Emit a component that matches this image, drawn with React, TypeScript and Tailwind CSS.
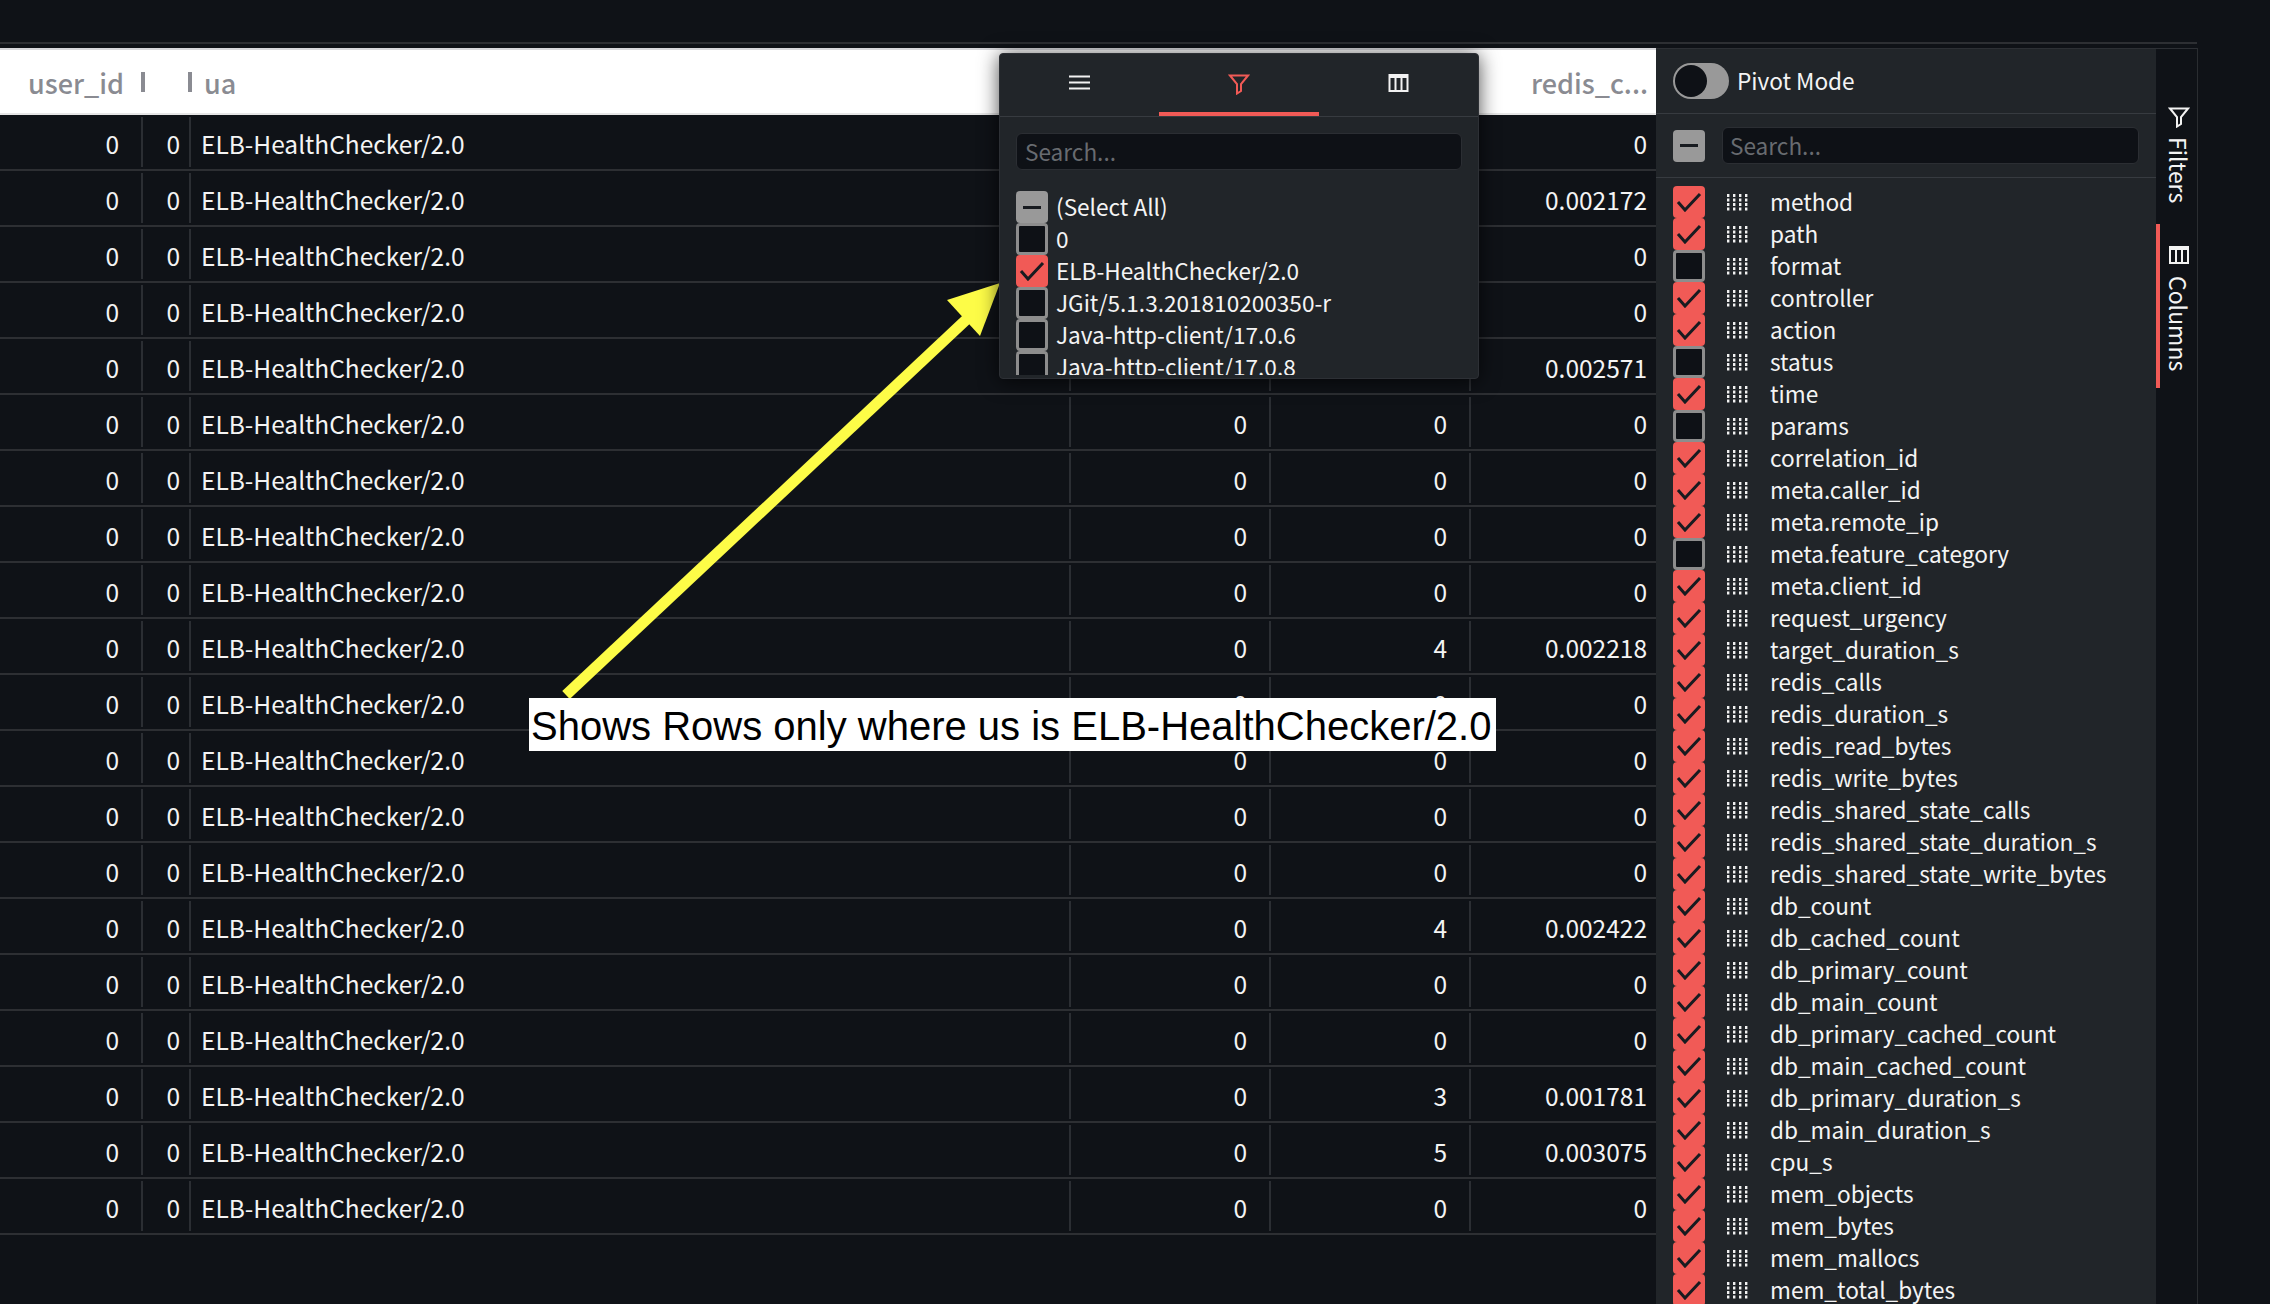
import React from 'react';

const redis = ['0', '0.002172', '0', '0', '0.002571', '0', '0', '0', '0', '0.002218', '0', '0', '0', '0', '0.002422', '0', '0', '0.001781', '0.003075', '0'];
const db = ['0', '4', '0', '0', '5', '0', '0', '0', '0', '4', '0', '0', '0', '0', '4', '0', '0', '3', '5', '0'];

const filterValues = [
  { label: '(Select All)', state: 'some' },
  { label: '0', state: 'off' },
  { label: 'ELB-HealthChecker/2.0', state: 'on' },
  { label: 'JGit/5.1.3.201810200350-r', state: 'off' },
  { label: 'Java-http-client/17.0.6', state: 'off' },
  { label: 'Java-http-client/17.0.8', state: 'off' },
];

const columns = [
  ['method', 'on'], ['path', 'on'], ['format', 'off'], ['controller', 'on'], ['action', 'on'], ['status', 'off'],
  ['time', 'on'], ['params', 'off'], ['correlation_id', 'on'], ['meta.caller_id', 'on'], ['meta.remote_ip', 'on'],
  ['meta.feature_category', 'off'], ['meta.client_id', 'on'], ['request_urgency', 'on'], ['target_duration_s', 'on'],
  ['redis_calls', 'on'], ['redis_duration_s', 'on'], ['redis_read_bytes', 'on'], ['redis_write_bytes', 'on'],
  ['redis_shared_state_calls', 'on'], ['redis_shared_state_duration_s', 'on'], ['redis_shared_state_write_bytes', 'on'],
  ['db_count', 'on'], ['db_cached_count', 'on'], ['db_primary_count', 'on'], ['db_main_count', 'on'],
  ['db_primary_cached_count', 'on'], ['db_main_cached_count', 'on'], ['db_primary_duration_s', 'on'],
  ['db_main_duration_s', 'on'], ['cpu_s', 'on'], ['mem_objects', 'on'], ['mem_bytes', 'on'], ['mem_mallocs', 'on'],
  ['mem_total_bytes', 'on'],
];

const Checkbox = ({ state }: { state: string }) => {
  if (state === 'on') {
    return (
      <span className="flex h-8 w-8 shrink-0 items-center justify-center rounded-[4px] bg-[#f15a56]">
        <svg width="26" height="20" viewBox="0 0 26 20" fill="none" stroke="#181b20" strokeWidth="3">
          <path d="M2 10l7 8L24 2" />
        </svg>
      </span>
    );
  }
  if (state === 'some') {
    return (
      <span className="flex h-8 w-8 shrink-0 items-center justify-center rounded-[4px] bg-[#999999]">
        <span className="h-[3px] w-[18px] bg-[#181b20]" />
      </span>
    );
  }
  return <span className="block h-8 w-8 shrink-0 rounded-[4px] border-[3px] border-[#8d8d8d] bg-[#0e1116]" />;
};

const Grip = () => (
  <svg width="21" height="17" viewBox="0 0 21 17" fill="#f2f2f2" className="shrink-0">
    {[0, 6, 12, 18].map((x) =>
      [0, 4.5, 9, 13.5].map((y) => <rect key={`${x}-${y}`} x={x} y={y} width="2.4" height="3" />),
    )}
  </svg>
);

const FunnelIcon = ({ color }: { color: string }) => (
  <svg width="22" height="21" viewBox="0 0 22 21" fill="none" stroke={color} strokeWidth="2">
    <path d="M2 1.5h18L13 10v7l-4 2.5V10z" />
  </svg>
);

const ColumnsIcon = ({ width, height }: { width: number; height: number }) => (
  <svg width={width} height={height} viewBox="0 0 20 18" fill="none" stroke="#f2f2f2" strokeWidth="2">
    <rect x="1" y="1" width="18" height="16" />
    <path d="M1 3h18M7 3v14M13 3v14" />
  </svg>
);

const Cell = ({ width, pad, text, last }: { width: string; pad: string; text: string; last?: boolean }) => (
  <div className={`flex h-[50px] items-center justify-end self-center pt-1 ${width} ${pad} ${last ? '' : 'border-r-2 border-[#2b2e33]'}`}>
    {text}
  </div>
);

export default function App() {
  return (
    <div
      className="relative h-[1304px] w-[2270px] overflow-hidden bg-[#0f1217] text-[#f4f4f4]"
      style={{ fontFamily: '"Noto Sans CJK JP", "Noto Sans", sans-serif' }}
    >
      {/* Top strip */}
      <div className="h-[44px] w-[2197px] border-b-2 border-[#2d2f33]" />

      <div className="mt-1 flex h-[1256px] w-[2198px] border-r border-[#2a2d31]">
        {/* Grid */}
        <div className="w-[1656px] shrink-0 border-t-2 border-[#d8d8dc]">
          <div className="flex h-[65px] items-center border-b-2 border-[#e6e6e6] bg-white text-[27px] font-medium text-[#8a8b92]">
            <div className="flex h-full w-[145px] items-center justify-between pl-7">
              <span className="pt-[3px]">user_id</span>
              <span className="h-5 w-1 bg-[#8a8b92]" />
            </div>
            <div className="flex h-full w-[47px] items-center justify-end">
              <span className="h-5 w-1 bg-[#8a8b92]" />
            </div>
            <div className="flex-1 pl-3 pt-[3px]">ua</div>
            <div className="pr-2 pt-[3px]">redis_c...</div>
          </div>
          {redis.map((value, i) => (
            <div key={i} className="flex h-[56px] items-center border-b-2 border-[#2d2f33] text-[24.5px]">
              <Cell width="w-[143px]" pad="pr-[22px]" text="0" />
              <Cell width="w-[48px]" pad="pr-[9px]" text="0" />
              <div className="flex h-[50px] w-[880px] items-center border-r-2 border-[#2b2e33] pl-[10px] pt-1">ELB-HealthChecker/2.0</div>
              <Cell width="w-[200px]" pad="pr-[22px]" text="0" />
              <Cell width="w-[200px]" pad="pr-[22px]" text={db[i]} />
              <Cell width="w-[185px]" pad="pr-[9px]" text={value} last />
            </div>
          ))}
        </div>

        {/* Columns panel */}
        <div className="flex w-[500px] shrink-0 flex-col overflow-hidden border-t border-[#2d3035] bg-[#212529]">
          <div className="flex h-[65px] shrink-0 items-center border-b border-[#373b40] pl-[17px] text-[22.6px]">
            <span className="relative h-9 w-14 shrink-0 rounded-full bg-[#999999]">
              <span className="absolute left-[2px] top-[2px] h-8 w-8 rounded-full bg-[#0e1116]" />
            </span>
            <span className="ml-2">Pivot Mode</span>
          </div>
          <div className="flex h-[64px] shrink-0 items-center border-b border-[#373b40] pl-[17px] pr-[17px]">
            <Checkbox state="some" />
            <div className="ml-[17px] flex h-[37px] flex-1 items-center rounded-[6px] border border-[#2b2e33] bg-[#0e1116] pl-[7px] text-[22.6px] text-[#686b70]">
              Search...
            </div>
          </div>
          <div className="pl-[17px] pt-[8px] text-[22.6px]">
            {columns.map(([name, state]) => (
              <div key={name} className="flex h-8 items-center">
                <Checkbox state={state} />
                <span className="ml-[22px]"><Grip /></span>
                <span className="mb-[1px] ml-[22px] whitespace-nowrap">{name}</span>
              </div>
            ))}
          </div>
        </div>

        {/* Side rail */}
        <div className="relative w-[41px] shrink-0 border-t border-[#2d3035] pt-[58px] text-[23px]">
          <div className="flex flex-col items-center pl-[4px]">
            <FunnelIcon color="#f2f2f2" />
            <span className="mt-[9px] [writing-mode:vertical-lr]">Filters</span>
          </div>
          <div className="mt-[21px] flex h-[164px] flex-col items-center border-l-4 border-[#f15a56] pt-[22px]">
            <ColumnsIcon width={20} height={18} />
            <span className="mt-[12px] [writing-mode:vertical-lr]">Columns</span>
          </div>
        </div>
      </div>

      {/* Annotation arrow */}
      <svg className="absolute left-0 top-0" width="2270" height="1304" fill="none">
        <path d="M566 695L968 318" stroke="#fdfc47" strokeWidth="11" />
        <path d="M1000 283L947 300L980 336Z" fill="#fdfc47" />
      </svg>

      {/* Annotation label */}
      <div
        className="absolute left-[529px] top-[698px] flex h-[53px] w-[967px] items-center whitespace-nowrap bg-white pl-[2px] pt-[2px] text-[40px] text-black"
        style={{ fontFamily: '"Liberation Sans", Arial, sans-serif' }}
      >
        Shows Rows only where us is ELB-HealthChecker/2.0
      </div>

      {/* Filter popup */}
      <div className="absolute left-[999px] top-[53px] h-[326px] w-[480px] overflow-hidden rounded-[4px] border border-[#2d3035] bg-[#212529] shadow-[0_2px_20px_rgba(0,0,0,0.7)]">
        <div className="flex h-[63px] items-center border-b border-[#373b40]">
          <div className="flex h-full flex-1 items-center justify-center pb-[5px]">
            <svg width="21" height="15" viewBox="0 0 21 15" stroke="#f2f2f2" strokeWidth="2">
              <path d="M0 1.5h21M0 7.5h21M0 13.5h21" />
            </svg>
          </div>
          <div className="flex h-full w-[160px] items-center justify-center border-b-4 border-[#f15a56] pt-[2px]">
            <FunnelIcon color="#f15a56" />
          </div>
          <div className="flex h-full flex-1 items-center justify-center pb-[5px]">
            <ColumnsIcon width={21} height={18} />
          </div>
        </div>
        <div className="mx-4 mt-4 flex h-[37px] items-center rounded-[6px] border border-[#2b2e33] bg-[#0e1116] pl-2 text-[22.6px] text-[#686b70]">
          Search...
        </div>
        <div className="ml-4 mt-[21px] h-[184px] overflow-hidden text-[22.6px]">
          {filterValues.map((item) => (
            <div key={item.label} className="flex h-8 items-center">
              <Checkbox state={item.state} />
              <span className="mb-[1px] ml-2 whitespace-nowrap">{item.label}</span>
            </div>
          ))}
        </div>
      </div>
    </div>
  );
}
